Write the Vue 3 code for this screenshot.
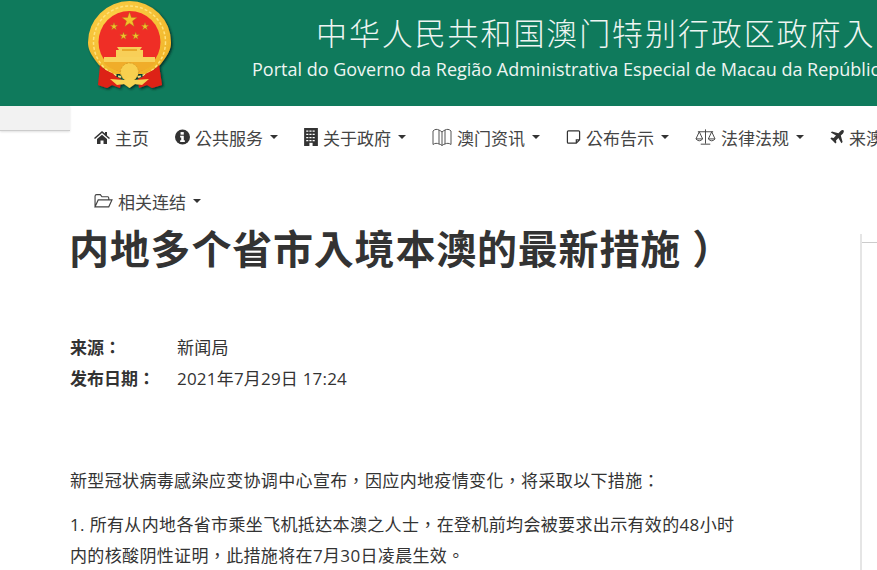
<template>
  <div class="page">
    <header class="top">
      <svg class="emblem" viewBox="0 0 90 92">
        <defs>
          <filter id="sh" x="-20%" y="-20%" width="140%" height="140%">
            <feDropShadow dx="1.5" dy="1.5" stdDeviation="1.2" flood-color="#06281d" flood-opacity="0.85"/>
          </filter>
          <radialGradient id="ring" cx="40%" cy="35%" r="75%">
            <stop offset="0%" stop-color="#ffd84f"/>
            <stop offset="100%" stop-color="#eeb025"/>
          </radialGradient>
        </defs>
        <g filter="url(#sh)">
          <path d="M13 65 C4 54 2 48 2 42.5 A41.5 41.5 0 0 1 85 42.5 C85 48 83 54 74 65 L62 74 H25 Z" fill="url(#ring)"/>
          <circle cx="43.5" cy="42" r="36" fill="none" stroke="#ffe27a" stroke-width="1.5" stroke-dasharray="3 2"/>
          <circle cx="43.5" cy="42" r="31" fill="#ef2d27"/>
          <path d="M18 57 H69 V63 C65 68 56 72 43.5 73 C31 72 22 68 18 63 Z" fill="#f0ad2a"/>
          <path d="M18 57 H69 V62 H18 Z" fill="#f8d25c"/>
          <path d="M31 47 H56 L54 50 H57 V57 H30 V50 H33 Z" fill="#f8cf58"/>
          <path d="M36 49 H51 V51 H36 Z" fill="#e8a92c"/>
          <path d="M14 65 C17 69 21 71 26 73 C29 76 32 78 35 79 L34 88 L26 85 L21 88 L12 85 Z" fill="#dd2016"/>
          <path d="M73 65 C70 69 66 71 61 73 C58 76 55 78 52 79 L53 88 L61 85 L66 88 L76 85 Z" fill="#dd2016"/>
          <circle cx="43.5" cy="72" r="9" fill="#f8d050" stroke="#dca62c" stroke-width="1" stroke-dasharray="2 1.5"/>
          <path d="M24 79 L38 80 L43.5 77 L49 80 L63 79 L56 85 L49 84 L43.5 88 L38 84 L31 85 Z" fill="#f8d352"/>
          <polygon v-for="(s, i) in stars" :key="i" :points="s" fill="#f4c22b" stroke="#a8761a" stroke-width="0.4"/>
        </g>
      </svg>
      <div class="titles">
        <div class="zh">中华人民共和国澳门特别行政区政府入口网站</div>
        <div class="pt">Portal do Governo da Região Administrativa Especial de Macau da República Popular da China</div>
      </div>
    </header>

    <div class="navrow">
      <div class="stub"></div>
      <nav class="nav">
        <a v-for="item in menu" :key="item.label" class="item">
          <svg class="ico" :style="{ width: item.w + 'px' }" :viewBox="item.box" v-html="item.svg"></svg>
          <span>{{ item.label }}</span>
          <i v-if="item.caret" class="caret"></i>
        </a>
      </nav>
    </div>

    <div class="content">
      <article class="article">
        <h1>内地多个省市入境本澳的最新措施 ）</h1>
        <div class="meta">
          <div class="row"><b>来源：</b><span>新闻局</span></div>
          <div class="row"><b>发布日期：</b><span>2021年7月29日 17:24</span></div>
        </div>
        <p>新型冠状病毒感染应变协调中心宣布，因应内地疫情变化，将采取以下措施：</p>
        <p>1. 所有从内地各省市乘坐飞机抵达本澳之人士，在登机前均会被要求出示有效的48小时内的核酸阴性证明，此措施将在7月30日凌晨生效。</p>
      </article>
      <aside class="side"><div class="side-rule"></div></aside>
    </div>
  </div>
</template>

<script setup>
function star(cx, cy, r) {
  const pts = []
  for (let i = 0; i < 10; i++) {
    const a = -Math.PI / 2 + (i * Math.PI) / 5
    const d = i % 2 ? r * 0.4 : r
    pts.push((cx + d * Math.cos(a)).toFixed(1) + ',' + (cy + d * Math.sin(a)).toFixed(1))
  }
  return pts.join(' ')
}

const stars = [star(43.5, 20, 8), star(28, 26.5, 4), star(59, 26.5, 4), star(37.5, 36, 4), star(49.7, 36, 4)]

const menu = [
  { label: '主页', w: 16, box: '0 0 16 14', svg: '<path fill="#333" d="M8 1 L11 3.6 V2 H13 V5.4 L16 8 L15 9 L8 3 L1 9 L0 8 Z M3 9 L8 4.8 L13 9 V14 H9.5 V10.5 H6.5 V14 H3 Z"/>' },
  { label: '公共服务', w: 15, box: '0 0 14 14', caret: true, svg: '<circle cx="7" cy="7" r="7" fill="#333"/><rect x="5.2" y="2.4" width="3" height="2.4" fill="#fff"/><path fill="#fff" d="M4.8 5.8 H8.2 V10 H9.2 V11.6 H4.8 V10 H5.8 V7.4 H4.8 Z"/>' },
  { label: '关于政府', w: 14, box: '0 0 13 17', caret: true, svg: '<rect width="13" height="17" fill="#333"/><path stroke="#fff" stroke-width="1.2" stroke-dasharray="2 1" d="M2 3 H11 M2 6 H11 M2 9 H11 M2 12 H11"/><rect x="5" y="14" width="3" height="3" fill="#fff"/>' },
  { label: '澳门资讯', w: 20, box: '0 0 20 18', caret: true, svg: '<path fill="none" stroke="#555" d="M1 3 C3 1 5 1 7 2 Q9 3 10 4 Q11 3 13 2 C15 1 17 1 19 3 V16.5 C17 15 15 15 13 16 Q11 16.5 10 17.5 Q9 16.5 7 16 C5 15 3 15 1 16.5 Z M7 2 V16 M10 4 V17.5 M13 2 V16"/>' },
  { label: '公布告示', w: 15, box: '0 0 16 16', caret: true, svg: '<path fill="none" stroke="#333" stroke-width="1.3" d="M2.5 1.5 H13.5 Q14.5 1.5 14.5 2.5 V11 L11 14.5 H2.5 Q1.5 14.5 1.5 13.5 V2.5 Q1.5 1.5 2.5 1.5 Z M14.5 11 H11 V14.5"/>' },
  { label: '法律法规', w: 21, box: '0 0 22 18', caret: true, svg: '<path fill="none" stroke="#444" d="M11 1 V16 M6 16.5 H16 M3 3.5 H19 M4.5 3.5 L1 11 H8 Z M17.5 3.5 L14 11 H21 Z M1 11 Q4.5 15 8 11 M14 11 Q17.5 15 21 11"/>' },
  { label: '来澳旅游', w: 14, box: '0 0 14 14', caret: true, svg: '<path fill="#333" d="M13.6 .4 C12.8 -.2 11.4 .2 10.6 1 L8.4 3.2 L2 1.4 L.8 2.6 L6 5.6 L3.6 8 L1.4 7.6 L.4 8.6 L3 11 L5.4 13.6 L6.4 12.6 L6 10.4 L8.4 8 L11.4 13.2 L12.6 12 L10.8 5.6 L13 3.4 C13.8 2.6 14.2 1.2 13.6 .4 Z"/>' },
  { label: '相关连结', w: 19, box: '0 0 18 14', caret: true, svg: '<path fill="none" stroke="#444" stroke-width="1.1" d="M1 12.5 V2.5 Q1 1 2.5 1 H6 L7.5 3 H13 Q14 3 14 4.5 V6 M1 12.5 L4 6 H17 L14 12.5 Z"/>' }
]
</script>

<style>
html, body { margin: 0; overflow: hidden; background: #fff; }
</style>

<style scoped>
.page { width: 877px; height: 570px; overflow: hidden; font-family: "Open Sans", "Noto Sans CJK TC", sans-serif; color: #333; }
.top { height: 106px; background: #0f7a5c; display: flex; padding-left: 86px; box-sizing: border-box; overflow: hidden; }
.emblem { width: 90px; height: 92px; flex: none; }
.titles { flex: none; margin-left: 76px; white-space: nowrap; color: #fff; }
.zh { font-size: 31px; line-height: 40px; letter-spacing: 1.9px; margin-top: 13px; margin-left: 64px; color: #eef5f2; font-weight: 300; }
.pt { font-size: 18px; line-height: 24px; margin-top: 4px; color: #eef5f2; }
.navrow { display: flex; align-items: flex-start; }
.stub { width: 70px; height: 24px; background: #f2f2f2; border-bottom: 1px solid #ccc; box-shadow: 0 1px 2px rgba(0,0,0,.12); flex: none; }
.nav { flex: none; width: 900px; display: flex; flex-wrap: wrap; padding-left: 24px; margin-top: -1px; box-sizing: border-box; }
.item { height: 64px; display: flex; align-items: center; gap: 5px; margin-right: 26px; font-size: 17px; color: #444; }
.ico { height: 18px; flex: none; }
.caret { width: 0; height: 0; border-left: 4px solid transparent; border-right: 4px solid transparent; border-top: 4px solid #333; margin-left: 2px; }
.content { display: flex; padding-left: 70px; margin-top: -9px; }
.article { width: 670px; flex: none; }
h1 { margin: 0 0 0 -1px; font-size: 40px; line-height: 50px; font-weight: 700; letter-spacing: .8px; color: #333; }
.meta { margin-top: 57px; font-size: 17px; }
.row { display: flex; height: 31px; align-items: center; }
.row b { width: 107px; font-weight: 700; }
.row span { letter-spacing: .2px; }
p { margin: 0; font-size: 17px; line-height: 31px; letter-spacing: .35px; }
.meta + p { margin-top: 72px; }
p + p { margin-top: 13px; }
.side { margin: 10px 0 0 120px; flex: none; width: 40px; height: 400px; border-left: 2px solid #e5e5e5; }
.side-rule { margin-top: 8px; border-top: 1px solid #ccc; }
</style>
